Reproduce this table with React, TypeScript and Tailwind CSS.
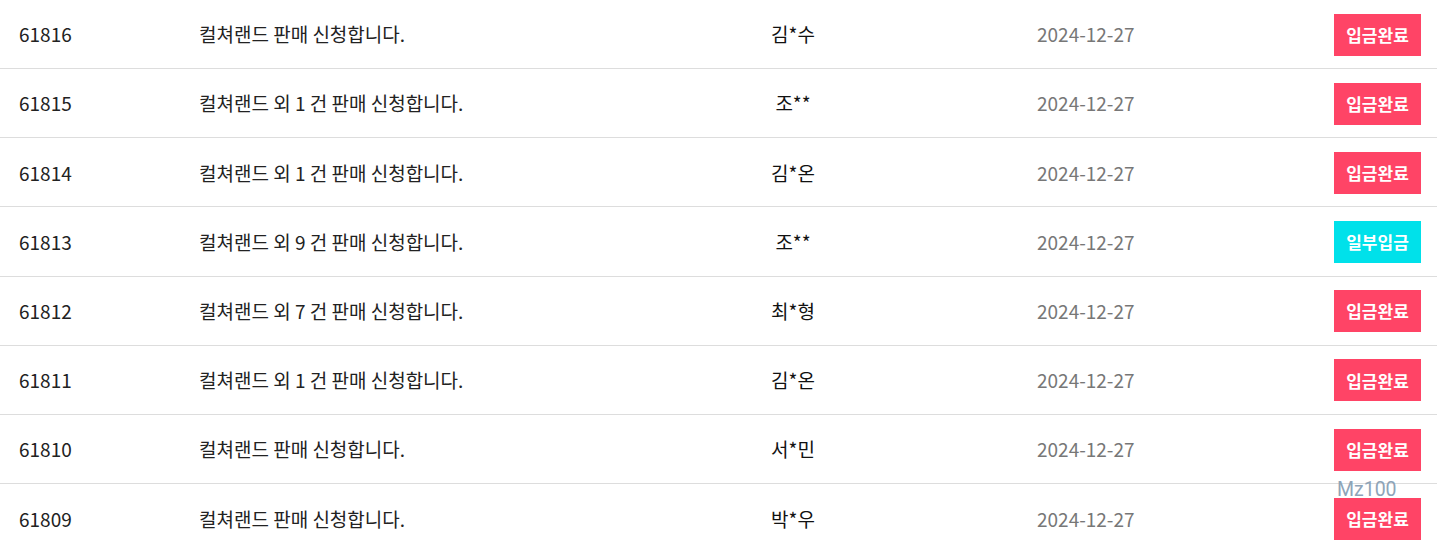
import React from "react";

type Row = { id: string; title: string; name: string; date: string; status: "done" | "partial" };

const rows: Row[] = [
  { id: "61816", title: "컬쳐랜드 판매 신청합니다.", name: "김*수", date: "2024-12-27", status: "done" },
  { id: "61815", title: "컬쳐랜드 외 1 건 판매 신청합니다.", name: "조**", date: "2024-12-27", status: "done" },
  { id: "61814", title: "컬쳐랜드 외 1 건 판매 신청합니다.", name: "김*온", date: "2024-12-27", status: "done" },
  { id: "61813", title: "컬쳐랜드 외 9 건 판매 신청합니다.", name: "조**", date: "2024-12-27", status: "partial" },
  { id: "61812", title: "컬쳐랜드 외 7 건 판매 신청합니다.", name: "최*형", date: "2024-12-27", status: "done" },
  { id: "61811", title: "컬쳐랜드 외 1 건 판매 신청합니다.", name: "김*온", date: "2024-12-27", status: "done" },
  { id: "61810", title: "컬쳐랜드 판매 신청합니다.", name: "서*민", date: "2024-12-27", status: "done" },
  { id: "61809", title: "컬쳐랜드 판매 신청합니다.", name: "박*우", date: "2024-12-27", status: "done" },
];

export default function App() {
  return (
    <div
      className="relative w-[1437px] h-[547px] overflow-hidden bg-white"
      style={{ fontFamily: '"Noto Sans CJK KR", "Noto Sans", sans-serif' }}
    >
      {rows.map((r, i) => (
        <div
          key={r.id}
          className={`flex items-center h-[69.17px] pt-[1px] ${i < rows.length - 1 ? "border-b border-[#dddddd]" : ""}`}
        >
          <div className="w-[199px] pl-[19px] text-[19px] text-[#222222]">{r.id}</div>
          <div className="w-[494px] text-[19px] text-[#222222]">{r.title}</div>
          <div className="w-[200px] text-center text-[19px] text-[#111111]">{r.name}</div>
          <div className="ml-[144px] text-[19px] text-[#777777]">{r.date}</div>
          <div className="ml-auto mr-[16px]">
            <span
              className={`flex items-center justify-center w-[87px] h-[42px] text-[17px] font-bold text-white ${
                r.status === "done" ? "bg-[#ff4466]" : "bg-[#00e1ea]"
              }`}
            >
              {r.status === "done" ? "입금완료" : "일부입금"}
            </span>
          </div>
        </div>
      ))}
      <div
        className="absolute left-[1337px] top-[478px] text-[19.5px] text-[#8ea4b8] leading-[24px]"
        style={{ fontFamily: "Roboto, sans-serif" }}
      >
        Mz100
      </div>
    </div>
  );
}
